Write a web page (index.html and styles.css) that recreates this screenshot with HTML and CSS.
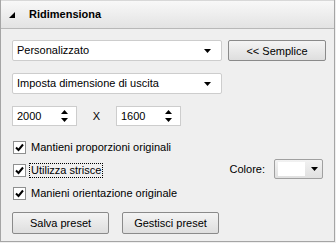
FILE: index.html
```html
<!DOCTYPE html>
<html>
<head>
	<title>Ridimensiona</title>
	<link rel="stylesheet" href="styles.css">
</head>
<body>
	<div class="panel">
		<div class="panel-header">
			<svg class="collapse" width="6" height="6" viewBox="0 0 6 6"><polygon points="6,0 6,6 0,6" fill="#000"/></svg>
			<span class="title">Ridimensiona</span>
		</div>
		<div class="panel-body">
			<div class="row">
				<div class="combo combo-wide">
					<span>Personalizzato</span>
					<svg class="arrow" width="7" height="4" viewBox="0 0 7 4"><polygon points="0,0 7,0 3.5,4" fill="#000"/></svg>
				</div>
				<button class="btn btn-simple">&lt;&lt; Semplice</button>
			</div>
			<div class="row">
				<div class="combo combo-wide">
					<span>Imposta dimensione di uscita</span>
					<svg class="arrow" width="7" height="4" viewBox="0 0 7 4"><polygon points="0,0 7,0 3.5,4" fill="#000"/></svg>
				</div>
			</div>
			<div class="row">
				<div class="spin">
					<span>2000</span>
					<svg class="spin-arrows" width="7" height="12" viewBox="0 0 7 12"><polygon points="3.5,0 7,4 0,4" fill="#000"/><polygon points="0,8 7,8 3.5,12" fill="#000"/></svg>
				</div>
				<span class="times">X</span>
				<div class="spin">
					<span>1600</span>
					<svg class="spin-arrows" width="7" height="12" viewBox="0 0 7 12"><polygon points="3.5,0 7,4 0,4" fill="#000"/><polygon points="0,8 7,8 3.5,12" fill="#000"/></svg>
				</div>
			</div>
			<div class="checks">
				<label class="check">
					<span class="box"><svg width="9" height="9" viewBox="0 0 9 9"><polyline points="1,4.5 3.5,7 8,1.5" fill="none" stroke="#000" stroke-width="2"/></svg></span>
					<span>Mantieni proporzioni originali</span>
				</label>
				<div class="check-line">
					<label class="check">
						<span class="box"><svg width="9" height="9" viewBox="0 0 9 9"><polyline points="1,4.5 3.5,7 8,1.5" fill="none" stroke="#000" stroke-width="2"/></svg></span>
						<span class="focus">Utilizza strisce</span>
					</label>
					<div class="color-pick">
						<span>Colore:</span>
						<div class="color-btn">
							<span class="swatch"></span>
							<svg class="arrow" width="7" height="4" viewBox="0 0 7 4"><polygon points="0,0 7,0 3.5,4" fill="#000"/></svg>
						</div>
					</div>
				</div>
				<label class="check">
					<span class="box"><svg width="9" height="9" viewBox="0 0 9 9"><polyline points="1,4.5 3.5,7 8,1.5" fill="none" stroke="#000" stroke-width="2"/></svg></span>
					<span>Manieni orientazione originale</span>
				</label>
			</div>
			<div class="row row-buttons">
				<button class="btn btn-preset">Salva preset</button>
				<button class="btn btn-preset">Gestisci preset</button>
			</div>
		</div>
	</div>
</body>
</html>
```

FILE: styles.css
```css
body {
	margin: 0;
	background-color: #efefef;
	font-family: "Liberation Sans", Arial, sans-serif;
	font-size: 11px;
	line-height: 13px;
	color: #000;
}

.panel {
	box-sizing: border-box;
	width: 335px;
	height: 242px;
	border: 1px solid #a5a5a5;
	border-top: none;
	background-color: #efefef;
}

.panel-header {
	height: 27px;
	display: flex;
	align-items: center;
	background: linear-gradient(#f8f8f8, #e3e3e3);
	border-top: 1px solid #d8d8d8;
	border-bottom: 1px solid #b8b8b8;
}

.collapse {
	margin-left: 8px;
	margin-right: 14px;
}

.title {
	font-weight: bold;
	font-size: 11px;
}

.panel-body {
	padding: 11px 0 0 11px;
}

.row {
	display: flex;
	align-items: center;
}

.row + .row {
	margin-top: 12px;
}

.combo {
	box-sizing: border-box;
	height: 21px;
	display: flex;
	align-items: center;
	justify-content: space-between;
	padding: 0 10px 0 4px;
	background-color: #fff;
	border: 1px solid #cdcdcd;
	border-radius: 2px;
}

.combo-wide {
	width: 210px;
}

.btn {
	box-sizing: border-box;
	height: 21px;
	padding: 0;
	font-family: inherit;
	font-size: 11px;
	color: #000;
	background: linear-gradient(#f4f4f4, #dedede);
	border: 1px solid #8a8a8a;
	border-radius: 2px;
}

.btn-simple {
	width: 98px;
	margin-left: 6px;
}

.spin {
	box-sizing: border-box;
	width: 65px;
	height: 20px;
	display: flex;
	align-items: center;
	justify-content: space-between;
	padding: 0 8px 0 4px;
	background-color: #fff;
	border: 1px solid #cdcdcd;
}

.times {
	width: 39px;
	text-align: center;
}

.checks {
	margin-top: 14px;
	display: flex;
	flex-direction: column;
	gap: 8px;
}

.check {
	display: flex;
	align-items: center;
	gap: 5px;
	height: 15px;
}

.box {
	box-sizing: border-box;
	width: 13px;
	height: 13px;
	margin-left: 1px;
	display: flex;
	align-items: center;
	justify-content: center;
	background-color: #fff;
	border: 1px solid #8e8f8f;
}

.focus {
	border: 1px dotted #000;
	padding: 0 1px;
	margin-left: -2px;
}

.check-line {
	display: flex;
	align-items: center;
	justify-content: space-between;
	width: 311px;
	height: 15px;
}

.color-pick {
	display: flex;
	align-items: center;
	gap: 9px;
	margin-top: -3px;
}

.color-btn {
	box-sizing: border-box;
	width: 49px;
	height: 20px;
	display: flex;
	align-items: center;
	gap: 6px;
	padding-left: 3px;
	background: linear-gradient(#f2f2f2, #e0e0e0);
	border: 1px solid #a0a0a0;
	border-radius: 2px;
}

.swatch {
	width: 27px;
	height: 14px;
	background-color: #fff;
}

.row-buttons {
	margin-top: 11px;
	gap: 13px;
}

.btn-preset {
	width: 97px;
	height: 22px;
}
```
